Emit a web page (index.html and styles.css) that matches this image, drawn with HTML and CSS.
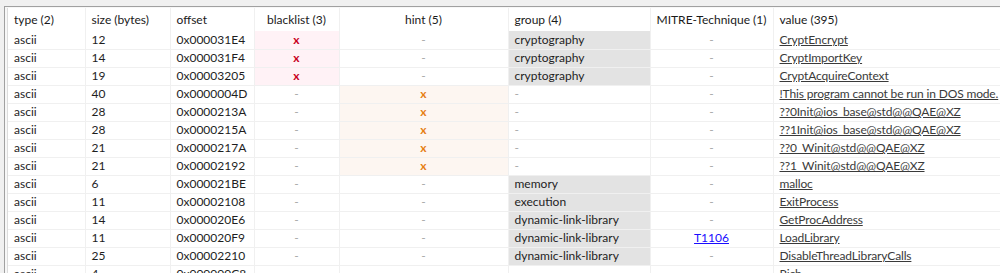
FILE: index.html
```html
<!DOCTYPE html>
<html lang="en">
<head>
  <meta charset="UTF-8">
  <meta name="viewport" content="width=device-width, initial-scale=1.0">
  <link rel="stylesheet" href="styles.css">
  <title>strings</title>
</head>
<body>
  <div class="frame">
    <div class="inner">
      <table class="grid">
        <colgroup>
          <col class="c-type">
          <col class="c-size">
          <col class="c-offset">
          <col class="c-black">
          <col class="c-hint">
          <col class="c-group">
          <col class="c-mitre">
          <col class="c-value">
        </colgroup>
        <thead>
          <tr>
            <th>type (2)</th>
            <th>size (bytes)</th>
            <th>offset</th>
            <th class="mid">blacklist (3)</th>
            <th class="mid">hint (5)</th>
            <th>group (4)</th>
            <th class="mid">MITRE-Technique (1)</th>
            <th>value (395)</th>
          </tr>
        </thead>
        <tbody>
          <tr>
            <td>ascii</td><td>12</td><td>0x000031E4</td>
            <td class="mid black"><span class="x-red">x</span></td>
            <td class="mid dash">-</td>
            <td class="grp">cryptography</td>
            <td class="mid dash">-</td>
            <td><span class="val">CryptEncrypt</span></td>
          </tr>
          <tr>
            <td>ascii</td><td>14</td><td>0x000031F4</td>
            <td class="mid black"><span class="x-red">x</span></td>
            <td class="mid dash">-</td>
            <td class="grp">cryptography</td>
            <td class="mid dash">-</td>
            <td><span class="val">CryptImportKey</span></td>
          </tr>
          <tr>
            <td>ascii</td><td>19</td><td>0x00003205</td>
            <td class="mid black"><span class="x-red">x</span></td>
            <td class="mid dash">-</td>
            <td class="grp">cryptography</td>
            <td class="mid dash">-</td>
            <td><span class="val">CryptAcquireContext</span></td>
          </tr>
          <tr>
            <td>ascii</td><td>40</td><td>0x0000004D</td>
            <td class="mid dash">-</td>
            <td class="mid hint"><span class="x-orange">x</span></td>
            <td class="dash">-</td>
            <td class="mid dash">-</td>
            <td><span class="val">!This program cannot be run in DOS mode.</span></td>
          </tr>
          <tr>
            <td>ascii</td><td>28</td><td>0x0000213A</td>
            <td class="mid dash">-</td>
            <td class="mid hint"><span class="x-orange">x</span></td>
            <td class="dash">-</td>
            <td class="mid dash">-</td>
            <td><span class="val">??0Init@ios_base@std@@QAE@XZ</span></td>
          </tr>
          <tr>
            <td>ascii</td><td>28</td><td>0x0000215A</td>
            <td class="mid dash">-</td>
            <td class="mid hint"><span class="x-orange">x</span></td>
            <td class="dash">-</td>
            <td class="mid dash">-</td>
            <td><span class="val">??1Init@ios_base@std@@QAE@XZ</span></td>
          </tr>
          <tr>
            <td>ascii</td><td>21</td><td>0x0000217A</td>
            <td class="mid dash">-</td>
            <td class="mid hint"><span class="x-orange">x</span></td>
            <td class="dash">-</td>
            <td class="mid dash">-</td>
            <td><span class="val">??0_Winit@std@@QAE@XZ</span></td>
          </tr>
          <tr>
            <td>ascii</td><td>21</td><td>0x00002192</td>
            <td class="mid dash">-</td>
            <td class="mid hint"><span class="x-orange">x</span></td>
            <td class="dash">-</td>
            <td class="mid dash">-</td>
            <td><span class="val">??1_Winit@std@@QAE@XZ</span></td>
          </tr>
          <tr>
            <td>ascii</td><td>6</td><td>0x000021BE</td>
            <td class="mid dash">-</td>
            <td class="mid dash">-</td>
            <td class="grp">memory</td>
            <td class="mid dash">-</td>
            <td><span class="val">malloc</span></td>
          </tr>
          <tr>
            <td>ascii</td><td>11</td><td>0x00002108</td>
            <td class="mid dash">-</td>
            <td class="mid dash">-</td>
            <td class="grp">execution</td>
            <td class="mid dash">-</td>
            <td><span class="val">ExitProcess</span></td>
          </tr>
          <tr>
            <td>ascii</td><td>14</td><td>0x000020E6</td>
            <td class="mid dash">-</td>
            <td class="mid dash">-</td>
            <td class="grp">dynamic-link-library</td>
            <td class="mid dash">-</td>
            <td><span class="val">GetProcAddress</span></td>
          </tr>
          <tr>
            <td>ascii</td><td>11</td><td>0x000020F9</td>
            <td class="mid dash">-</td>
            <td class="mid dash">-</td>
            <td class="grp">dynamic-link-library</td>
            <td class="mid"><a class="mitre" href="#">T1106</a></td>
            <td><span class="val">LoadLibrary</span></td>
          </tr>
          <tr>
            <td>ascii</td><td>25</td><td>0x00002210</td>
            <td class="mid dash">-</td>
            <td class="mid dash">-</td>
            <td class="grp">dynamic-link-library</td>
            <td class="mid dash">-</td>
            <td><span class="val">DisableThreadLibraryCalls</span></td>
          </tr>
          <tr>
            <td>ascii</td><td>4</td><td>0x000000C8</td>
            <td class="mid dash">-</td>
            <td class="mid dash">-</td>
            <td class="dash">-</td>
            <td class="mid dash">-</td>
            <td><span class="val">Rich</span></td>
          </tr>
        </tbody>
      </table>
    </div>
  </div>
</body>
</html>
```

FILE: styles.css
```css
*, *:before, *:after {
  margin: 0;
  padding: 0;
  box-sizing: border-box;
}
html, body {
  height: 100%;
  overflow: hidden;
}
body {
  background: #f0f0f0;
  font-family: Lato, 'Noto Sans', sans-serif;
  font-size: 12px;
  color: #1e1e1e;
}

.frame {
  margin: 6px 0 0 4px;
  height: 100%;
  border-top: 1px solid #a0a0a0;
  border-left: 1px solid #a0a0a0;
  background: #f7f7f7;
  padding: 1px 0 0 2px;
}

.inner {
  height: 100%;
  background: #ffffff;
  border-left: 1px solid #dcdcdc;
}

.grid {
  width: 992px;
  border-collapse: collapse;
  table-layout: fixed;
}

.c-type   { width: 77px; }
.c-size   { width: 85px; }
.c-offset { width: 84px; }
.c-black  { width: 85px; }
.c-hint   { width: 169px; }
.c-group  { width: 142px; }
.c-mitre  { width: 123px; }
.c-value  { width: 227px; }

.grid th {
  height: 23px;
  font-weight: normal;
  text-align: left;
  padding: 0 6px;
  white-space: nowrap;
  border-right: 1px solid #f0f0f0;
  color: #1a1a1a;
}

.grid td {
  height: 18px;
  padding: 0 6px;
  white-space: nowrap;
  overflow: hidden;
  border-right: 1px solid #f0f0f0;
  border-bottom: 1px solid #f0f0f0;
  line-height: 16px;
}

.grid .mid {
  text-align: center;
}

.dash {
  color: #a8a8a8;
}

.black {
  background: #fff2f6;
}
.hint {
  background: #fdf6f1;
}
.grp {
  background: #e3e3e3;
}

.x-red {
  color: #c8001e;
  font-weight: bold;
}
.x-orange {
  color: #e67e14;
  font-weight: bold;
}

.val {
  color: #3a3a3a;
  text-decoration: underline;
  letter-spacing: -0.15px;
}

.mitre {
  color: #1a0dff;
  text-decoration: underline;
}
```
